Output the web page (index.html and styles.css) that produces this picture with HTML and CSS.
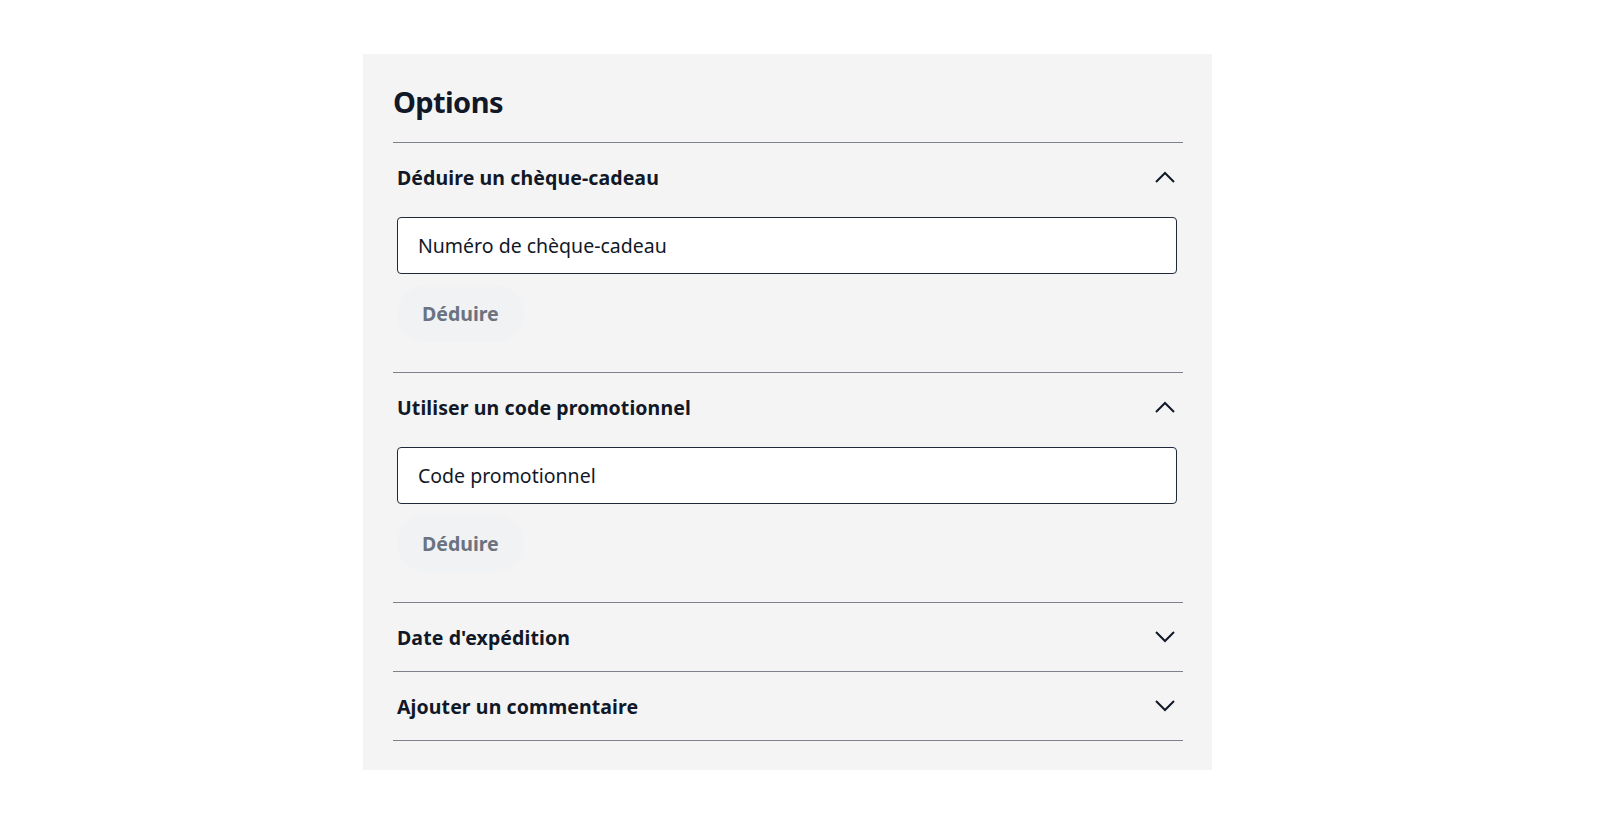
FILE: index.html
```html
<!DOCTYPE html>
<html lang="fr">
<head>
    <meta charset="UTF-8">
    <meta name="viewport" content="width=device-width, initial-scale=1.0">
    <title>Options</title>
    <link rel="stylesheet" href="styles.css">
</head>
<body>
<div class="page">
    <div class="options">
        <h2 class="options-title">Options</h2>

        <div class="option open">
            <div class="option-head">
                <span>Déduire un chèque-cadeau</span>
                <svg class="chevron" width="20" height="12" viewBox="0 0 20 12"><polyline points="1,11 10,2 19,11"/></svg>
            </div>
            <div class="option-body">
                <input type="text" class="field" placeholder="Numéro de chèque-cadeau">
                <button type="button" class="deduct" disabled>Déduire</button>
            </div>
        </div>

        <div class="option open">
            <div class="option-head">
                <span>Utiliser un code promotionnel</span>
                <svg class="chevron" width="20" height="12" viewBox="0 0 20 12"><polyline points="1,11 10,2 19,11"/></svg>
            </div>
            <div class="option-body">
                <input type="text" class="field" placeholder="Code promotionnel">
                <button type="button" class="deduct" disabled>Déduire</button>
            </div>
        </div>

        <div class="option">
            <div class="option-head">
                <span>Date d'expédition</span>
                <svg class="chevron" width="20" height="12" viewBox="0 0 20 12"><polyline points="1,1 10,10 19,1"/></svg>
            </div>
        </div>

        <div class="option last">
            <div class="option-head">
                <span>Ajouter un commentaire</span>
                <svg class="chevron" width="20" height="12" viewBox="0 0 20 12"><polyline points="1,1 10,10 19,1"/></svg>
            </div>
        </div>
    </div>
</div>
</body>
</html>
```

FILE: styles.css
```css
body {
    margin: 0;
    background: #ffffff;
    font-family: "Noto Sans", "Open Sans", Arial, sans-serif;
    color: #111827;
}

.page {
    padding: 54px 0 0 363px;
}

.options {
    width: 849px;
    box-sizing: border-box;
    background-color: #f4f4f4;
    padding: 28px 29px 29px 30px;
}

.options-title {
    margin: 0 0 20px;
    font-size: 29px;
    line-height: 40px;
    font-weight: 700;
    letter-spacing: -0.6px;
}

.option {
    border-top: 1px solid #7c818c;
}
.option.last {
    border-bottom: 1px solid #7c818c;
}

.option-head {
    height: 68px;
    display: flex;
    align-items: center;
    justify-content: space-between;
    padding: 0 8px 0 4px;
    font-size: 19.5px;
    font-weight: 700;
    letter-spacing: 0.1px;
}

.chevron {
    fill: none;
    stroke: #111827;
    stroke-width: 2;
}

.option-body {
    display: flex;
    flex-direction: column;
    align-items: flex-start;
    gap: 11px;
    padding: 6px 6px 30px 4px;
}

.field {
    width: 100%;
    height: 57px;
    box-sizing: border-box;
    border: 1px solid #1f2937;
    border-radius: 4px;
    background: #ffffff;
    padding: 0 20px;
    font-family: inherit;
    font-size: 19.5px;
    color: #111827;
}
.field::placeholder {
    color: #111827;
    opacity: 1;
}

.deduct {
    height: 57px;
    padding: 0 25px;
    border: none;
    border-radius: 29px;
    background-color: #f1f2f3;
    color: #6b7280;
    font-family: inherit;
    font-size: 19.5px;
    font-weight: 700;
}
```
